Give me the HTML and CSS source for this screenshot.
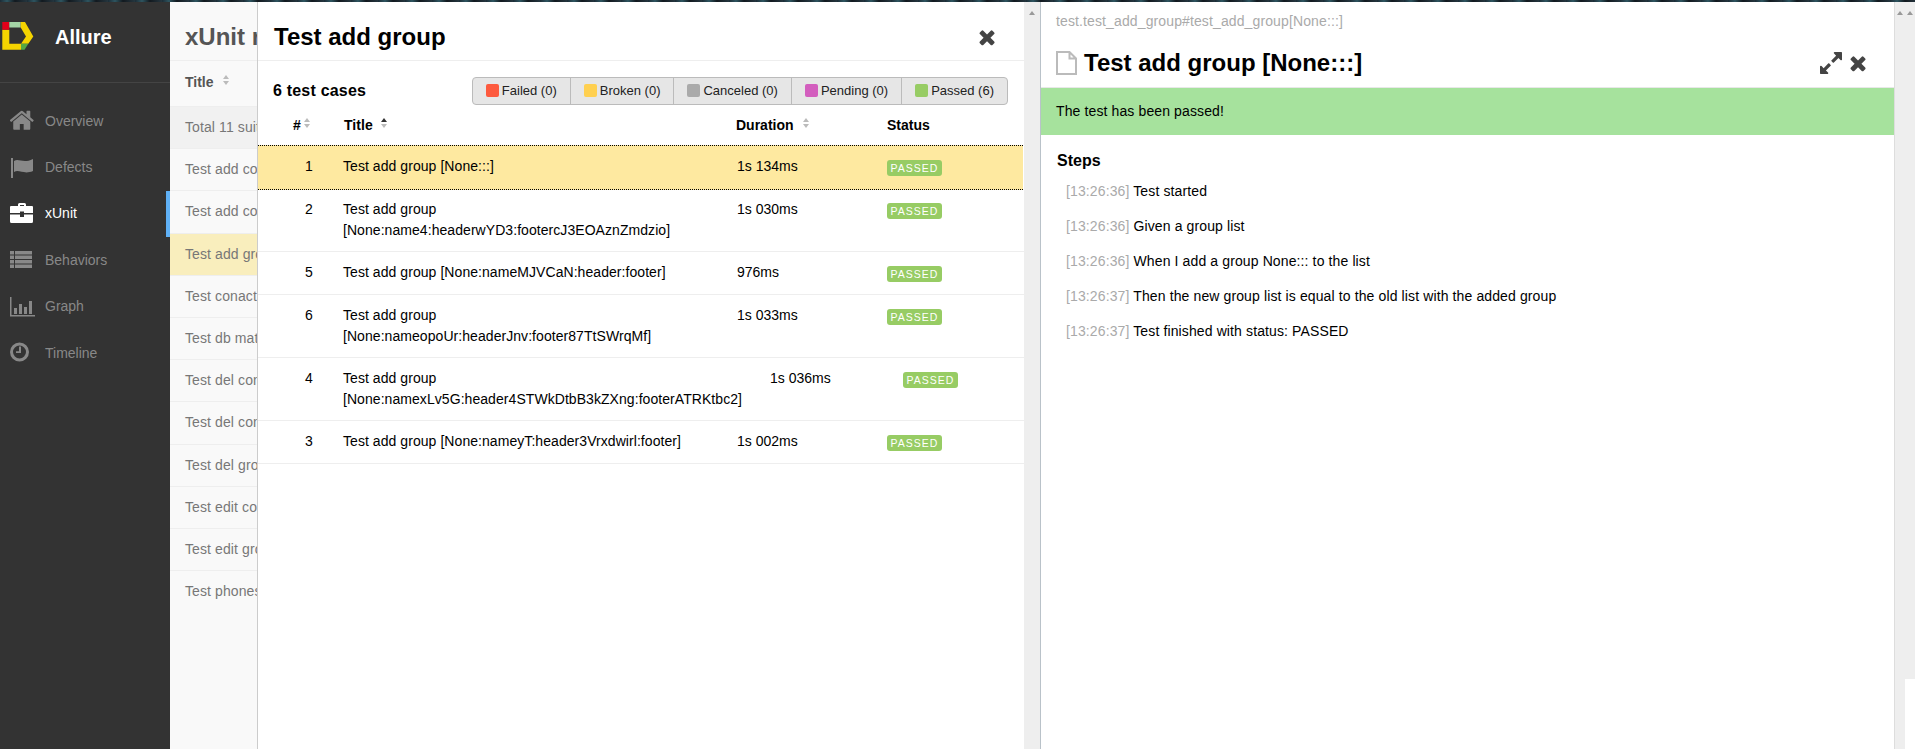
FILE: index.html
```html
<!DOCTYPE html>
<html lang="en">
<head>
    <meta charset="UTF-8">
    <title>Allure Report</title>
    <link rel="stylesheet" href="styles.css">
</head>
<body>
    <div class="desktop-strip"></div>
    <div class="app">
        <nav class="side-nav">
            <div class="brand">
                <svg class="brand-logo" width="34" height="28" viewBox="0 0 34 28">
                    <path d="M2.300 7.700H9.300V21.700H21V27.700H2.300Z" fill="#f5d400"/>
                    <path d="M2.300 0H9.300V7.700H2.300Z" fill="#e2001a"/>
                    <path d="M9.300 0H20.700V5.500H9.300Z" fill="#a5d6a7"/>
                    <path d="M20.700 0H25L33.300 14.500L28.300 21.700H21L26 14.500L20.700 5.500Z" fill="#f5d400"/>
                    <path d="M21 21.700H28.300L24.500 27.700H21Z" fill="#55a844"/>
                </svg>
                <span class="brand-name">Allure</span>
            </div>
            <ul class="nav-list">
                <li class="nav-item">
                    <svg class="nav-icon" width="26" height="24" viewBox="0 0 26 24"><path transform="translate(-1.500 -2) scale(0.0148)" d="M1472 992v480q0 26-19 45t-45 19h-384v-384h-256v384h-384q-26 0-45-19t-19-45v-480q0-1 .5-3t.5-3l575-474 575 474q1 2 1 6zm223-69l-62 74q-8 9-21 11h-3q-13 0-21-7l-692-577-692 577q-12 8-24 7-13-2-21-11l-62-74q-8-10-7-23.500t11-21.500l719-599q32-26 76-26t76 26l244 204v-195q0-14 9-23t23-9h192q14 0 23 9t9 23v408l219 182q10 8 11 21.500t-7 23.500z"/></svg>
                    Overview
                </li>
                <li class="nav-item">
                    <svg class="nav-icon" width="26" height="24" viewBox="0 0 26 24"><path d="M1 2H3V22H1Z"/><path d="M4 5C9 2 13 8 23 3V15C14 19 9 13 4 16Z"/></svg>
                    Defects
                </li>
                <li class="nav-item nav-item--active">
                    <svg class="nav-icon" width="26" height="24" viewBox="0 0 26 24"><path fill-rule="evenodd" d="M8 4V2.500Q8 1 9.500 1H14.500Q16 1 16 2.500V4H22Q23 4 23 5V11H14V9.500H10V11H0V5Q0 4 1 4ZM10 3V4H14V3ZM0 12.500H10V15H14V12.500H23V19.500Q23 21 21.500 21H1.500Q0 21 0 19.500Z"/></svg>
                    xUnit
                </li>
                <li class="nav-item">
                    <svg class="nav-icon" width="26" height="24" viewBox="0 0 26 24"><path d="M0 3H4V6.500H0ZM5 3H22V6.500H5ZM0 7.500H4V11H0ZM5 7.500H22V11H5ZM0 12H4V15.500H0ZM5 12H22V15.500H5ZM0 16.500H4V20H0ZM5 16.500H22V20H5Z"/></svg>
                    Behaviors
                </li>
                <li class="nav-item">
                    <svg class="nav-icon" width="26" height="24" viewBox="0 0 26 24"><path d="M0 2H1.500V20H25V21.500H0ZM4 13H7V19H4ZM9 9H12V19H9ZM14 12H17V19H14ZM19 6H22V19H19Z"/></svg>
                    Graph
                </li>
                <li class="nav-item">
                    <svg class="nav-icon" width="26" height="24" viewBox="0 0 26 24"><circle cx="9.500" cy="11" r="8" fill="none" stroke="currentColor" stroke-width="3"/><path d="M9 5.500H11V12H6V10.200H9Z"/></svg>
                    Timeline
                </li>
            </ul>
        </nav>

        <section class="suites">
            <h2 class="suites-title">xUnit report</h2>
            <div class="suites-head">Title <span class="sort sort--head"></span></div>
            <div class="suite suite--total">Total 11 suites</div>
            <div class="suite">Test add contact</div>
            <div class="suite">Test add contact to group</div>
            <div class="suite suite--current">Test add group</div>
            <div class="suite">Test conact info</div>
            <div class="suite">Test db matches ui</div>
            <div class="suite">Test del contact</div>
            <div class="suite">Test del contact from group</div>
            <div class="suite">Test del group</div>
            <div class="suite">Test edit contact</div>
            <div class="suite">Test edit group</div>
            <div class="suite">Test phones</div>
        </section>

        <section class="cases">
            <header class="cases-header">
                <h2 class="cases-title">Test add group</h2>
                <svg class="close-icon" width="18" height="18" viewBox="0 0 1792 1792"><path d="M1490 1322q0 40-28 68l-136 136q-28 28-68 28t-68-28l-294-294-294 294q-28 28-68 28t-68-28l-136-136q-28-28-28-68t28-68l294-294-294-294q-28-28-28-68t28-68l136-136q28-28 68-28t68 28l294 294 294-294q28-28 68-28t68 28l136 136q28 28 28 68t-28 68l-294 294 294 294q28 28 28 68z" transform="translate(-230 -230) scale(1.26)"/></svg>
            </header>
            <div class="cases-toolbar">
                <strong class="cases-count">6 test cases</strong>
                <div class="filters">
                    <span class="filter"><i class="swatch swatch--failed"></i>Failed (0)</span>
                    <span class="filter"><i class="swatch swatch--broken"></i>Broken (0)</span>
                    <span class="filter"><i class="swatch swatch--canceled"></i>Canceled (0)</span>
                    <span class="filter"><i class="swatch swatch--pending"></i>Pending (0)</span>
                    <span class="filter"><i class="swatch swatch--passed"></i>Passed (6)</span>
                </div>
            </div>
            <div class="cases-head">
                <div class="col-num-head">#<span class="sort"></span></div>
                <div class="col-title col-title--head">Title<span class="sort sort--active"></span></div>
                <div class="col-duration col-duration--head">Duration<span class="sort"></span></div>
                <div class="col-status">Status</div>
            </div>
            <div class="case case--current">
                <div class="col-num">1</div>
                <div class="col-title">Test add group [None:::]</div>
                <div class="col-duration">1s 134ms</div>
                <div class="col-status"><span class="badge">PASSED</span></div>
            </div>
            <div class="case">
                <div class="col-num">2</div>
                <div class="col-title">Test add group<br>[None:name4:headerwYD3:footercJ3EOAznZmdzio]</div>
                <div class="col-duration">1s 030ms</div>
                <div class="col-status"><span class="badge">PASSED</span></div>
            </div>
            <div class="case">
                <div class="col-num">5</div>
                <div class="col-title">Test add group [None:nameMJVCaN:header:footer]</div>
                <div class="col-duration">976ms</div>
                <div class="col-status"><span class="badge">PASSED</span></div>
            </div>
            <div class="case">
                <div class="col-num">6</div>
                <div class="col-title">Test add group<br>[None:nameopoUr:headerJnv:footer87TtSWrqMf]</div>
                <div class="col-duration">1s 033ms</div>
                <div class="col-status"><span class="badge">PASSED</span></div>
            </div>
            <div class="case case--wide">
                <div class="col-num">4</div>
                <div class="col-title">Test add group<br>[None:namexLv5G:header4STWkDtbB3kZXng:footerATRKtbc2]</div>
                <div class="col-duration">1s 036ms</div>
                <div class="col-status"><span class="badge">PASSED</span></div>
            </div>
            <div class="case">
                <div class="col-num">3</div>
                <div class="col-title">Test add group [None:nameyT:header3Vrxdwirl:footer]</div>
                <div class="col-duration">1s 002ms</div>
                <div class="col-status"><span class="badge">PASSED</span></div>
            </div>
        </section>

        <div class="scrollbar scrollbar--cases"><span class="scroll-arrow"></span></div>

        <section class="detail">
            <div class="detail-path">test.test_add_group#test_add_group[None:::]</div>
            <header class="detail-header">
                <svg class="file-icon" width="21" height="24" viewBox="0 0 21 24"><path d="M1 1H13.500L20 7.500V23H1ZM13.500 1V7.500H20" fill="none" stroke="#bbb" stroke-width="2"/></svg>
                <h2 class="detail-title">Test add group [None:::]</h2>
                <svg class="expand-icon" width="22" height="22" viewBox="0 0 1792 1792"><path transform="translate(-150 -150) scale(1.17)" d="M883 1056q0 13-10 23l-332 332 144 144q19 19 19 45t-19 45-45 19h-448q-26 0-45-19t-19-45v-448q0-26 19-45t45-19 45 19l144 144 332-332q10-10 23-10t23 10l114 114q10 10 10 23zm781-864v448q0 26-19 45t-45 19-45-19l-144-144-332 332q-10 10-23 10t-23-10l-114-114q-10-10-10-23t10-23l332-332-144-144q-19-19-19-45t19-45 45-19h448q26 0 45 19t19 45z"/></svg>
                <svg class="close-icon close-icon--detail" width="18" height="18" viewBox="0 0 1792 1792"><path d="M1490 1322q0 40-28 68l-136 136q-28 28-68 28t-68-28l-294-294-294 294q-28 28-68 28t-68-28l-136-136q-28-28-28-68t28-68l294-294-294-294q-28-28-28-68t28-68l136-136q28-28 68-28t68 28l294 294 294-294q28-28 68-28t68 28l136 136q28 28 28 68t-28 68l-294 294 294 294q28 28 28 68z" transform="translate(-230 -230) scale(1.26)"/></svg>
            </header>
            <div class="status-bar">The test has been passed!</div>
            <h3 class="steps-title">Steps</h3>
            <ul class="steps">
                <li class="step"><span class="step-time">[13:26:36]</span> Test started</li>
                <li class="step"><span class="step-time">[13:26:36]</span> Given a group list</li>
                <li class="step"><span class="step-time">[13:26:36]</span> When I add a group None::: to the list</li>
                <li class="step"><span class="step-time">[13:26:37]</span> Then the new group list is equal to the old list with the added group</li>
                <li class="step"><span class="step-time">[13:26:37]</span> Test finished with status: PASSED</li>
            </ul>
        </section>

        <div class="scrollbar scrollbar--detail"><span class="scroll-arrow"></span></div>
        <div class="scrollbar scrollbar--page"><span class="scroll-arrow"></span></div>
    </div>
</body>
</html>
```

FILE: styles.css
```css
* {
    box-sizing: border-box;
}
html, body {
    height: 100%;
}
body {
    margin: 0;
    overflow: hidden;
    background-color: #fff;
    color: #000;
    font-family: "Liberation Sans", Arial, sans-serif;
    font-size: 14px;
    line-height: 21px;
}
h2, h3, ul {
    margin: 0;
    padding: 0;
}
ul {
    list-style: none;
}

.desktop-strip {
    width: 1915px;
    height: 2px;
    background: repeating-linear-gradient(90deg, #1c2c36 0, #2e5560 7px, #12191f 15px, #25363f 27px);
}
.app {
    display: flex;
    height: 747px;
}

/* left nav */
.side-nav {
    flex: 0 0 170px;
    background-color: #333;
    color: #888;
}
.brand {
    display: flex;
    height: 81px;
    border-bottom: 1px solid #444;
    padding-top: 20px;
}
.brand-logo {
    flex: none;
}
.brand-name {
    margin-left: 21px;
    color: #fff;
    font-size: 20px;
    font-weight: bold;
    line-height: 30px;
}
.nav-list {
    padding-top: 15px;
}
.nav-item {
    display: flex;
    align-items: center;
    height: 46.400px;
    padding-left: 10px;
}
.nav-item--active {
    border-right: 4px solid #5fb0f5;
    color: #fff;
}
.nav-icon {
    flex: none;
    margin-right: 9px;
    fill: currentColor;
}

.suites {
    flex: 0 0 87px;
    overflow: hidden;
    background-color: #f9f9f9;
    color: #777;
    white-space: nowrap;
}
.suites-title {
    height: 59px;
    padding: 17px 0 0 15px;
    border-bottom: 1px solid #eee;
    color: #555;
    font-size: 24px;
    line-height: 36px;
}
.suites-head {
    height: 45px;
    padding: 11px 0 0 15px;
    color: #555;
    font-weight: bold;
}
.suite {
    height: 42.200px;
    padding: 10px 0 0 15px;
    border-top: 1px solid #eee;
    letter-spacing: 0.1px;
}
.suite--total {
    background-color: #f1f1f1;
}
.suite--current {
    background-color: #f9eebd;
}

/* small up/down sort arrows */
.sort {
    display: inline-block;
    position: relative;
    width: 6px;
    height: 10px;
    margin-left: 3px;
    vertical-align: 2px;
}
.sort::before, .sort::after {
    content: "";
    position: absolute;
    left: 0;
    border-left: 3px solid transparent;
    border-right: 3px solid transparent;
}
.sort::before {
    top: 0;
    border-bottom: 4px solid #bbb;
}
.sort::after {
    bottom: 0;
    border-top: 4px solid #bbb;
}
.sort--head {
    margin-left: 6px;
}
.sort--active {
    margin-left: 8px;
}
.sort--active::before {
    border-bottom-color: #333;
}

/* test cases pane */
.cases {
    flex: 0 0 767px;
    border-left: 1px solid #ccc;
    background-color: #fff;
}
.cases-header {
    display: flex;
    justify-content: space-between;
    height: 59px;
    padding: 17px 28px 0 16px;
    border-bottom: 1px solid #eee;
}
.cases-title {
    font-size: 24px;
    line-height: 36px;
}
.close-icon {
    flex: none;
    margin-top: 9px;
    fill: #444;
}
.cases-toolbar {
    display: flex;
    justify-content: space-between;
    align-items: center;
    height: 44px;
    padding: 15px 16px 0 15px;
}
.cases-count {
    font-size: 16px;
    letter-spacing: 0.2px;
}
.filters {
    display: flex;
    height: 28px;
    border: 1px solid #bbb;
    border-radius: 4px;
    background-color: #e6e6e6;
    font-size: 13px;
}
.filter {
    display: flex;
    align-items: center;
    padding: 0 13px;
    border-left: 1px solid #bbb;
    color: #222;
}
.filter:first-child {
    border-left: 0;
}
.swatch {
    width: 13px;
    height: 13px;
    margin-right: 3px;
    border-radius: 2px;
}
.swatch--failed { background-color: #fd5a3e; }
.swatch--broken { background-color: #ffd050; }
.swatch--canceled { background-color: #aaa; }
.swatch--pending { background-color: #d35ebe; }
.swatch--passed { background-color: #97cc64; }

.cases-head {
    display: flex;
    height: 40px;
    padding-top: 10px;
    font-weight: bold;
}
.col-num-head {
    flex: 0 0 85px;
    padding-left: 35px;
}
.col-num {
    flex: 0 0 85px;
    padding-left: 17px;
    text-align: center;
}
.col-title {
    flex: 0 0 394px;
    letter-spacing: 0.06px;
}
.col-duration {
    flex: 0 0 150px;
}
.col-status {
    min-height: 22px;
}
.col-title--head {
    padding-left: 1px;
}
.col-duration--head {
    margin-left: -1px;
    flex-basis: 151px;
}
.col-duration--head .sort {
    margin-left: 9px;
}

.case {
    display: flex;
    padding: 10px 0;
    border-bottom: 1px solid #eee;
}
.case--current {
    margin-right: 1px;
    padding-bottom: 11px;
    border-top: 1px dotted #000;
    border-bottom: 1px dotted #000;
    background-color: #fee9a0;
}
.case--current + .case {
    padding-top: 9px;
}
.case--wide .col-title {
    flex-basis: 427px;
}
.case--wide .col-duration {
    flex-basis: 133px;
}
.badge {
    display: block;
    width: 55px;
    height: 16px;
    margin-top: 4px;
    border-radius: 3px;
    background-color: #97cc64;
    color: #fff;
    font-size: 10.500px;
    line-height: 16px;
    letter-spacing: 1px;
    text-align: center;
}

/* scrollbars */
.scrollbar {
    flex: none;
    display: flex;
    justify-content: center;
    padding-top: 9px;
    background-color: #eee;
}
.scrollbar--cases {
    width: 17px;
    border-right: 1px solid #b9c2c9;
}
.scrollbar--detail {
    width: 11px;
    border-left: 1px solid #ddd;
}
.scrollbar--page {
    width: 10px;
    height: 677px;
}
.scroll-arrow {
    width: 0;
    height: 0;
    border-left: 3px solid transparent;
    border-right: 3px solid transparent;
    border-bottom: 4px solid #999;
}

/* test detail pane */
.detail {
    flex: 0 0 853px;
    background-color: #fff;
    letter-spacing: 0.12px;
}
.detail-path {
    height: 29px;
    padding: 9px 0 0 15px;
    color: #aaa;
}
.detail-header {
    display: flex;
    align-items: center;
    height: 57px;
    padding: 7px 0 0 15px;
    border-bottom: 1px solid #e8e8e8;
}
.file-icon {
    flex: none;
    margin-right: 7px;
}
.detail-title {
    flex: 1;
    font-size: 24px;
    line-height: 36px;
    letter-spacing: 0;
}
.expand-icon {
    flex: none;
    fill: #444;
}
.close-icon--detail {
    margin: 0 27px 0 7px;
}
.status-bar {
    height: 47px;
    padding: 13px 0 0 15px;
    background-color: #a6e29d;
}
.steps-title {
    margin: 14px 0 0 16px;
    font-size: 16px;
    line-height: 24px;
    letter-spacing: 0;
}
.steps {
    padding: 8px 0 0 25px;
}
.step {
    height: 35.100px;
}
.step-time {
    color: #aaa;
}
```
